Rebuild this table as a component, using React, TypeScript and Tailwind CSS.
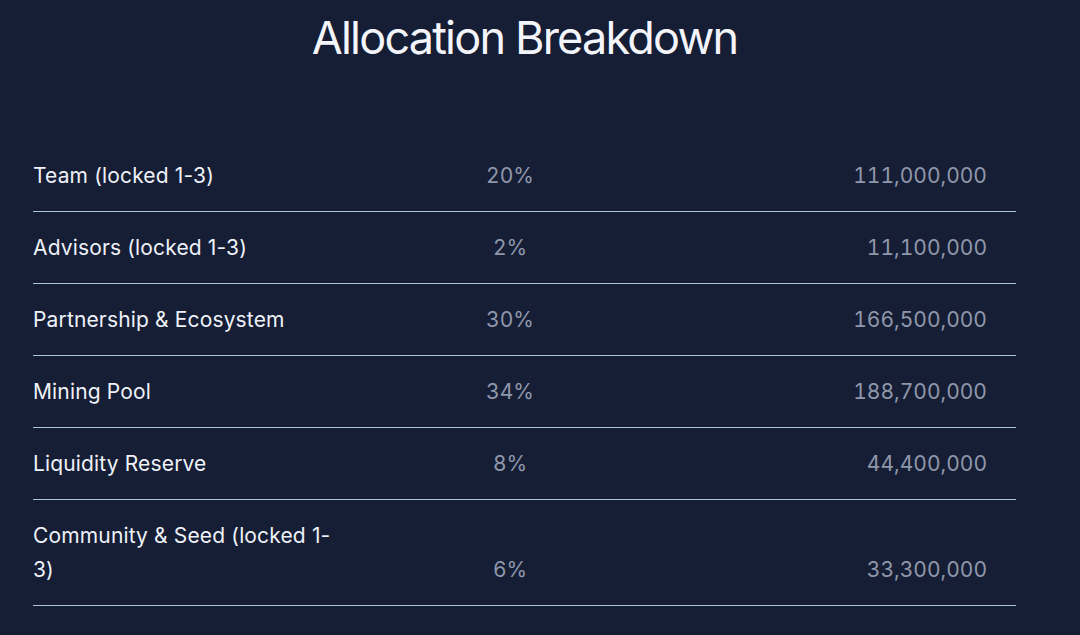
import React from 'react';

const rows = [
  { name: 'Team (locked 1-3)', pct: '20%', amount: '111,000,000' },
  { name: 'Advisors (locked 1-3)', pct: '2%', amount: '11,100,000' },
  { name: 'Partnership & Ecosystem', pct: '30%', amount: '166,500,000' },
  { name: 'Mining Pool', pct: '34%', amount: '188,700,000' },
  { name: 'Liquidity Reserve', pct: '8%', amount: '44,400,000' },
  { name: 'Community & Seed (locked 1-3)', pct: '6%', amount: '33,300,000' },
];

export default function App() {
  return (
    <div className="min-h-[635px] w-full bg-[#161e35] font-['Inter','Liberation_Sans',sans-serif]">
      <div className="w-[983px] ml-[33px]">
        <h1 className="pt-[12px] text-center text-[45px] leading-[52px] text-[#f3f5fa] tracking-[-1.8px]">
          Allocation Breakdown
        </h1>

        {/* Allocation table */}
        <div className="mt-[76px]">
          {rows.map((r) => (
            <div
              key={r.name}
              className="grid grid-cols-[312px_330px_1fr] items-end pt-[19px] pb-[18px] border-b border-[#a9c4dc] text-[21px] leading-[34px]"
            >
              <div className="text-[#eef1f7] pr-[4px] tracking-[0.15px]">{r.name}</div>
              <div className="text-center text-[#8f97aa] tabular-nums">{r.pct}</div>
              <div className="text-right pr-[29px] text-[#8f97aa] tabular-nums">{r.amount}</div>
            </div>
          ))}
        </div>
      </div>
    </div>
  );
}
